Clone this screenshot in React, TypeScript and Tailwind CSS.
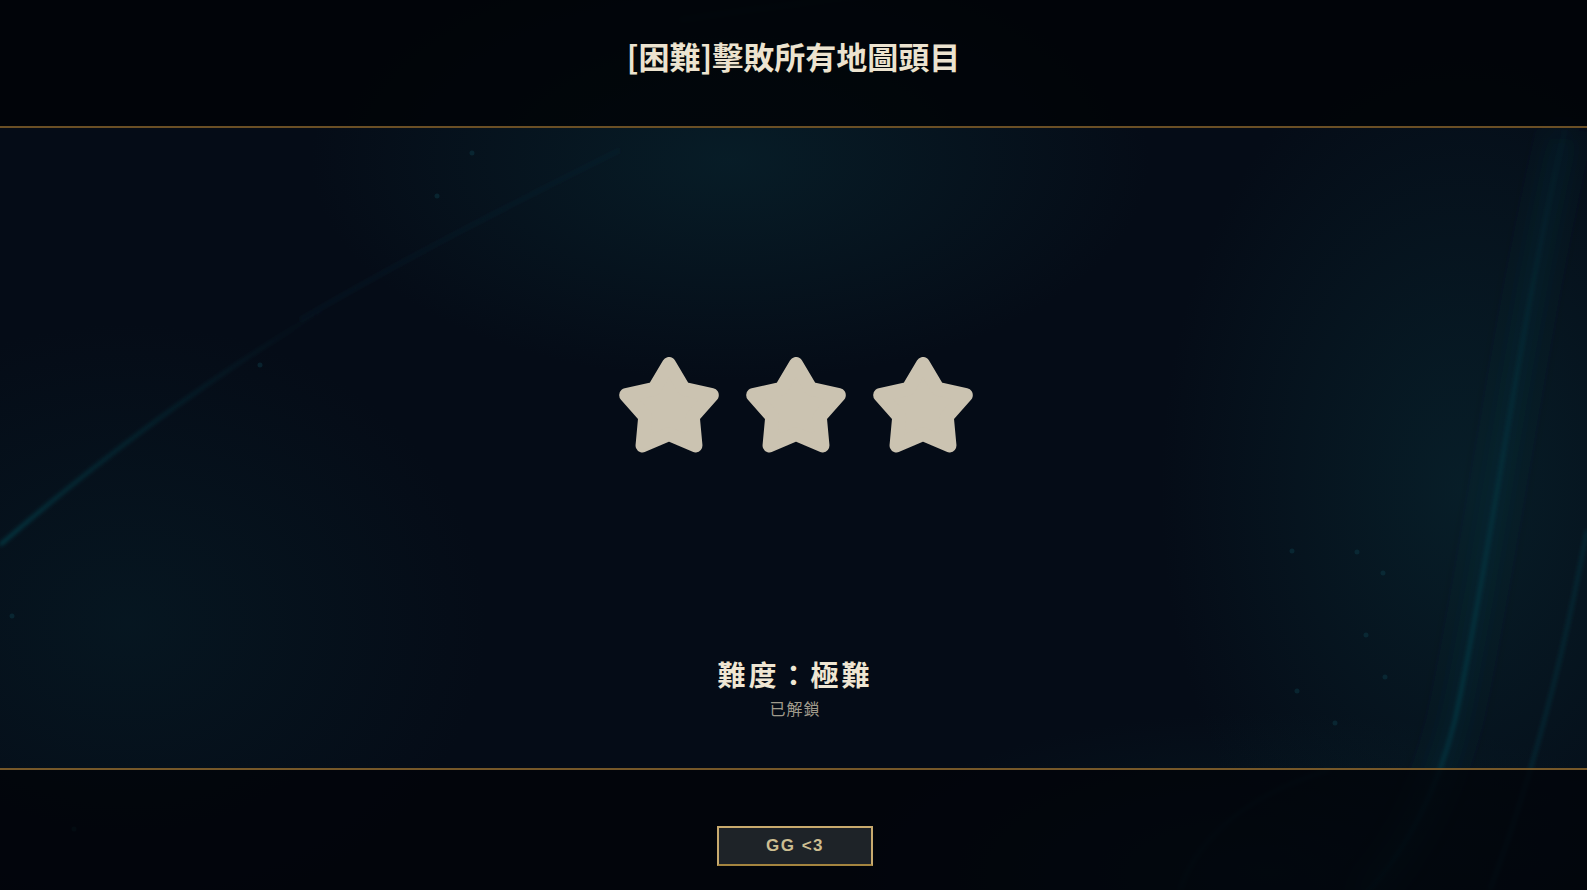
import React from "react";

const cjk = "font-['Noto_Sans_CJK_TC','Noto_Sans_CJK_SC',sans-serif]";

// rounded five-point star, built from a polygon with a fat round-joined stroke
const starPoints = (() => {
  const cx = 50;
  const cy = 52;
  const R = 45;
  const r = 25;
  const pts: string[] = [];
  for (let i = 0; i < 10; i++) {
    const a = (i * 36 * Math.PI) / 180;
    const rad = i % 2 === 0 ? R : r;
    pts.push(`${(cx + rad * Math.sin(a)).toFixed(2)},${(cy - rad * Math.cos(a)).toFixed(2)}`);
  }
  return pts.join(" ");
})();

const Star = () => (
  <svg width="100" height="97" viewBox="0 0 100 97">
    <polygon
      points={starPoints}
      fill="#cbc3b1"
      stroke="#cbc3b1"
      strokeWidth="14"
      strokeLinejoin="round"
    />
  </svg>
);

const Backdrop = () => (
  <svg
    className="pointer-events-none absolute inset-0 h-full w-full"
    viewBox="0 0 1587 890"
    preserveAspectRatio="none"
  >
    <defs>
      <filter id="soft" x="-20%" y="-20%" width="140%" height="140%">
        <feGaussianBlur stdDeviation="2" />
      </filter>
      <filter id="wide" x="-20%" y="-20%" width="140%" height="140%">
        <feGaussianBlur stdDeviation="14" />
      </filter>
      <linearGradient id="fadeL" x1="0" y1="1" x2="1" y2="0">
        <stop offset="0" stopColor="#0d5d68" stopOpacity="0.75" />
        <stop offset="0.6" stopColor="#0d5d68" stopOpacity="0.3" />
        <stop offset="1" stopColor="#0d5d68" stopOpacity="0" />
      </linearGradient>
      <linearGradient id="fadeR" x1="0" y1="0" x2="0" y2="1">
        <stop offset="0" stopColor="#0e5a66" stopOpacity="0.1" />
        <stop offset="0.75" stopColor="#0e5a66" stopOpacity="0.65" />
        <stop offset="1" stopColor="#0e5a66" stopOpacity="0.3" />
      </linearGradient>
    </defs>

    {/* left streaks */}
    <path d="M0 545 C 110 450, 220 370, 340 300" stroke="url(#fadeL)" strokeWidth="2.5" fill="none" filter="url(#soft)" />
    <path d="M300 320 C 420 250, 520 200, 620 150" stroke="#0c4550" strokeOpacity="0.22" strokeWidth="3" fill="none" filter="url(#soft)" />
    <path d="M680 20 C 780 5, 860 -5, 940 -10" stroke="#0c4550" strokeOpacity="0.25" strokeWidth="3" fill="none" filter="url(#soft)" />

    {/* right arcs */}
    <path d="M1565 130 C 1520 320, 1490 560, 1455 720 C 1435 800, 1400 860, 1360 900" stroke="url(#fadeR)" strokeWidth="2.5" fill="none" filter="url(#soft)" />
    <path d="M1565 130 C 1520 320, 1490 560, 1455 720 C 1435 800, 1400 860, 1360 900" stroke="#0b3f4a" strokeOpacity="0.22" strokeWidth="30" fill="none" filter="url(#wide)" />
    <path d="M1587 530 C 1565 650, 1535 770, 1490 890" stroke="#0e5a66" strokeOpacity="0.4" strokeWidth="2.5" fill="none" filter="url(#soft)" />
    <path d="M1180 890 C 1200 830, 1260 790, 1330 770" stroke="#0e5a66" strokeOpacity="0.2" strokeWidth="3" fill="none" filter="url(#soft)" />

    {/* faint specks */}
    {[
      [1292, 551], [1357, 552], [1383, 573], [1366, 635], [1385, 677], [1297, 691], [1335, 723],
      [472, 153], [437, 196], [260, 365], [12, 616], [74, 829],
    ].map(([x, y], i) => (
      <circle key={i} cx={x} cy={y} r="2.5" fill="#0f4450" opacity="0.4" />
    ))}
  </svg>
);

export default function App() {
  return (
    <div className="relative flex h-screen w-full flex-col overflow-hidden bg-[#050c17] bg-[radial-gradient(ellipse_420px_220px_at_46%_18%,rgba(9,42,52,0.55),transparent),radial-gradient(ellipse_300px_460px_at_92%_55%,rgba(9,44,54,0.55),transparent),radial-gradient(ellipse_360px_300px_at_8%_70%,rgba(7,32,42,0.5),transparent),radial-gradient(ellipse_420px_160px_at_80%_98%,rgba(6,36,44,0.5),transparent)]">
      <Backdrop />

      {/* header */}
      <header className="relative z-10 flex h-[126px] shrink-0 justify-center bg-[#010307]/85 pt-[40px]">
        <h1 className={`${cjk} text-[31px] font-bold leading-none text-[#ece3cf]`}>
          [困難]擊敗所有地圖頭目
        </h1>
      </header>
      <div className="relative z-10 h-[2px] shrink-0 bg-[#6a4f25]" />

      {/* body */}
      <main className="relative z-10 flex flex-1 flex-col items-center pt-[229px] pb-[52px]">
        <div className="ml-[4px] flex gap-[27px]">
          <Star />
          <Star />
          <Star />
        </div>
        <div className="flex-1" />
        <div className="ml-[3px] flex flex-col items-center gap-[12px]">
          <h2 className={`${cjk} text-[28px] font-bold leading-none tracking-[3px] text-[#efe6d3]`}>
            難度：極難
          </h2>
          <p className={`${cjk} text-[16px] leading-none tracking-[1px] text-[#a09b8c]`}>
            已解鎖
          </p>
        </div>
      </main>
      <div className="relative z-10 h-[2px] shrink-0 bg-[#765829]" />

      {/* footer */}
      <footer className="relative z-10 flex h-[120px] shrink-0 justify-center bg-[#010308]/75 pt-[56px]">
        <button className="ml-[3px] h-[40px] w-[156px] border-2 border-[#c8aa6e] border-b-[#a4843f] bg-[#1e2328] font-['Liberation_Sans',sans-serif] text-[17px] font-bold tracking-[1.5px] text-[#cdbe91]">
          GG &lt;3
        </button>
      </footer>
    </div>
  );
}
